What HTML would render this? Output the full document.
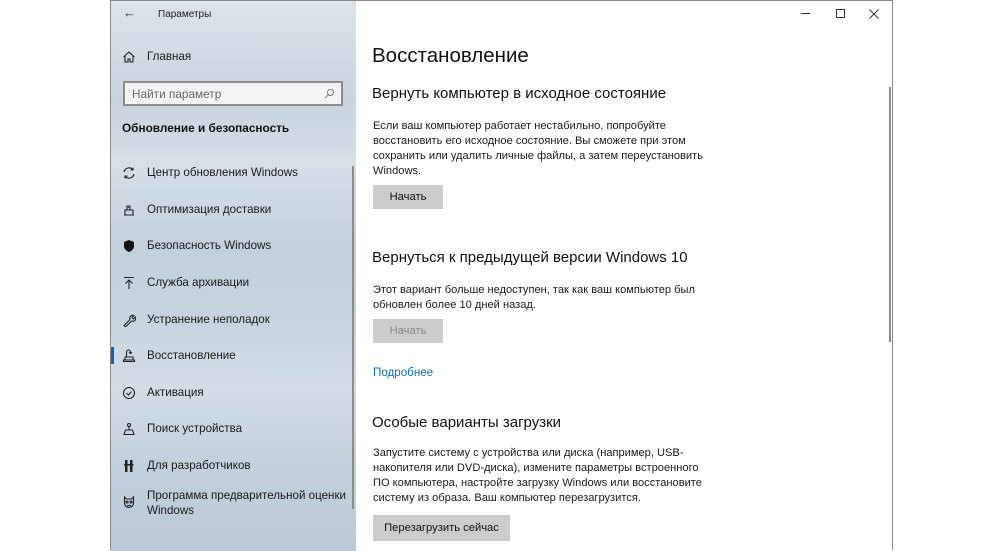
<!DOCTYPE html>
<html><head><meta charset="utf-8"><style>
*{margin:0;padding:0;box-sizing:border-box}
body{width:1000px;height:550px;background:#fff;position:relative;overflow:hidden;font-family:"Liberation Sans","Noto Sans CJK SC",sans-serif;color:#000}
.win{position:absolute;left:110px;top:0;width:783px;height:550px;border:1px solid #8a8a8a;border-bottom:none;background:#fff}
.side{position:absolute;left:0;top:0;width:245px;height:550px;background:linear-gradient(180deg,#dde3ea 0%,#c9d3de 18%,#d7dfe7 30%,#c3d0dc 45%,#c8d5e1 60%,#d5dde6 70%,#c2cfdc 85%,#bccad8 100%)}
.t{position:absolute;white-space:nowrap}
.s{font-size:11.6px;color:#1a1a1a}
.c{font-size:11.1px;color:#1a1a1a;line-height:15px}
.h{font-size:15px;color:#111}
.btn{position:absolute;background:#cccccc;font-size:11.2px;text-align:center;line-height:24px;color:#111}
.ic{position:absolute;left:11px;width:14px;height:14px}
</style></head><body>
<div class="win">
<div class="side">
 <div class="t" style="left:12px;top:4px;font-size:13px;color:#333">&#8592;</div>
 <div class="t" style="left:47px;top:8px;font-size:10px;color:#222">Параметры</div>
 <svg class="ic" style="top:49px" viewBox="0 0 14 14" fill="none" stroke="#222" stroke-width="1.1"><path d="M1.5 7L7 2l5.5 5M3 6v6h3V9h2v3h3V6"/></svg>
 <div class="t s" style="left:36px;top:49px">Главная</div>
 <div style="position:absolute;left:12px;top:80px;width:220px;height:25px;border:2px solid #8c8c8c;background:#f3f4f5"></div>
 <div class="t" style="left:21px;top:86px;font-size:11.8px;color:#666">Найти параметр</div>
 <svg style="position:absolute;left:213px;top:87px" width="11" height="11" viewBox="0 0 11 11" fill="none" stroke="#777"><circle cx="6.5" cy="4.5" r="3"/><path d="M4.4 6.6L1 10"/></svg>
 <div class="t" style="left:11px;top:120px;font-size:11.8px;font-weight:bold;color:#111">Обновление и безопасность</div>
 <svg class="ic" style="top:165px" viewBox="0 0 14 14" fill="none" stroke="#222" stroke-width="1.1"><path d="M2 6a5 5 0 0 1 9-2M12 8a5 5 0 0 1-9 2M11 1.5V4H8.5M3 12.5V10h2.5"/></svg>
 <div class="t s" style="left:36px;top:165px">Центр обновления Windows</div>
 <svg class="ic" style="top:202px" viewBox="0 0 14 14" fill="none" stroke="#222" stroke-width="1.1"><path d="M2 12h10M3 12V7h8v5M5 7V3h3v4M6 4.5h1"/></svg>
 <div class="t s" style="left:36px;top:202px">Оптимизация доставки</div>
 <svg class="ic" style="top:238px" viewBox="0 0 14 14"><path d="M7 1l5 2v4c0 3-2.5 5-5 6-2.5-1-5-3-5-6V3z" fill="#111"/></svg>
 <div class="t s" style="left:36px;top:238px">Безопасность Windows</div>
 <svg class="ic" style="top:275px" viewBox="0 0 14 14" fill="none" stroke="#222" stroke-width="1.1"><path d="M2 1.5h10M7 13V4M3.5 7.5L7 4l3.5 3.5"/></svg>
 <div class="t s" style="left:36px;top:275px">Служба архивации</div>
 <svg class="ic" style="top:312px" viewBox="0 0 14 14" fill="none" stroke="#222" stroke-width="1.1"><path d="M2 12.5l6-6a3 3 0 0 1 4-4l-2 2 1.5 1.5 2-2a3 3 0 0 1-4 4l-6 6z"/></svg>
 <div class="t s" style="left:36px;top:312px">Устранение неполадок</div>
 <div style="position:absolute;left:0;top:346px;width:3px;height:17px;background:#0067c0"></div>
 <svg class="ic" style="top:348px" viewBox="0 0 14 14" fill="none" stroke="#222" stroke-width="1.1"><path d="M1.5 11h11v1.5h-11zM3 11V8h8v3M4.5 8V3a2 2 0 0 1 4 0v1.5M7 3.5l1.5 1 1.5-1"/></svg>
 <div class="t s" style="left:36px;top:348px">Восстановление</div>
 <svg class="ic" style="top:385px" viewBox="0 0 14 14" fill="none" stroke="#222" stroke-width="1.1"><circle cx="7" cy="7" r="5.5"/><path d="M4.5 7l2 2 3-3.5"/></svg>
 <div class="t s" style="left:36px;top:385px">Активация</div>
 <svg class="ic" style="top:421px" viewBox="0 0 14 14" fill="none" stroke="#222" stroke-width="1.1"><circle cx="7" cy="3" r="1.5"/><path d="M7 4.5V8M2 12.5h10L10.5 8h-7z"/></svg>
 <div class="t s" style="left:36px;top:421px">Поиск устройства</div>
 <svg class="ic" style="top:458px" viewBox="0 0 14 14" fill="#222"><rect x="3" y="1" width="2.5" height="12"/><rect x="8" y="1" width="2.5" height="12"/><rect x="2" y="5" width="9.5" height="1.5"/></svg>
 <div class="t s" style="left:36px;top:458px">Для разработчиков</div>
 <svg class="ic" style="top:494px" viewBox="0 0 14 14" fill="none" stroke="#222" stroke-width="1.1"><path d="M2.5 2l2 2h5l2-2v6a4.5 4.5 0 0 1-9 0z"/><circle cx="5" cy="7" r="1"/><circle cx="9" cy="7" r="1"/><path d="M5 10.5h4"/></svg>
 <div class="t s" style="left:36px;top:487px;line-height:15px">Программа предварительной оценки<br>Windows</div>
 <div style="position:absolute;left:241px;top:165px;width:2px;height:343px;background:#8c8c8c"></div>
</div>
<div style="position:absolute;left:690px;top:12px;width:9px;height:1px;background:#333"></div>
<div style="position:absolute;left:725px;top:8px;width:9px;height:9px;border:1px solid #333"></div>
<svg style="position:absolute;left:758px;top:8px" width="10" height="10" viewBox="0 0 10 10" stroke="#333" stroke-width="1"><path d="M0.5 0.5l9 9M9.5 0.5l-9 9"/></svg>
<div style="position:absolute;left:778px;top:86px;width:2px;height:255px;background:#8c8c8c"></div>

<div class="t" style="left:261px;top:43px;font-size:20.5px;color:#111">Восстановление</div>
<div class="t h" style="left:261px;top:84px">Вернуть компьютер в исходное состояние</div>
<div class="t c" style="left:262px;top:118px">Если ваш компьютер работает нестабильно, попробуйте<br>восстановить его исходное состояние. Вы сможете при этом<br>сохранить или удалить личные файлы, а затем переустановить<br>Windows.</div>
<div class="btn" style="left:262px;top:184px;width:70px">Начать</div>
<div class="t h" style="left:261px;top:248px">Вернуться к предыдущей версии Windows 10</div>
<div class="t c" style="left:262px;top:282px">Этот вариант больше недоступен, так как ваш компьютер был<br>обновлен более 10 дней назад.</div>
<div class="btn" style="left:262px;top:318px;width:70px;color:#888">Начать</div>
<div class="t" style="left:262px;top:365px;font-size:11.6px;color:#0a6fbd">Подробнее</div>
<div class="t h" style="left:261px;top:413px">Особые варианты загрузки</div>
<div class="t c" style="left:262px;top:445px">Запустите систему с устройства или диска (например, USB-<br>накопителя или DVD-диска), измените параметры встроенного<br>ПО компьютера, настройте загрузку Windows или восстановите<br>систему из образа. Ваш компьютер перезагрузится.</div>
<div class="btn" style="left:262px;top:514px;width:137px;height:26px;line-height:26px">Перезагрузить сейчас</div>
</div>
</body></html>
